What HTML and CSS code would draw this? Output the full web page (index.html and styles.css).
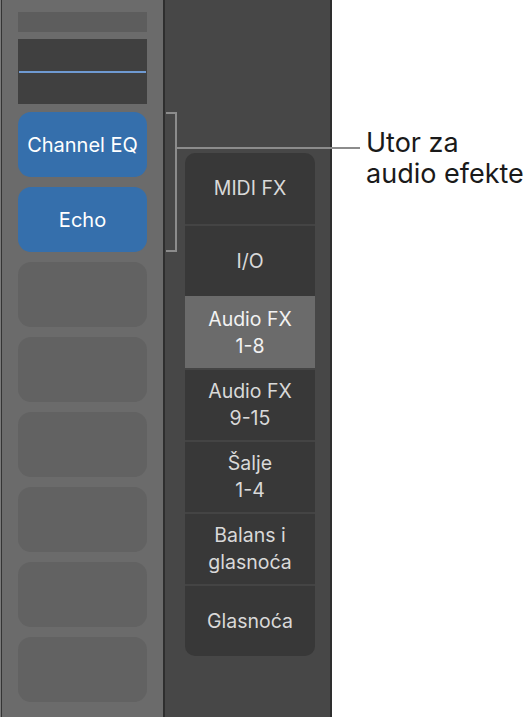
FILE: index.html
```html
<!DOCTYPE html>
<html lang="hr">
<head>
    <meta charset="UTF-8">
    <meta name="viewport" content="width=device-width, initial-scale=1.0">
    <title>Utor za audio efekte</title>
    <link rel="stylesheet" href="styles.css">
</head>
<body>
    <div class="stage">
        <div class="channel">
            <div class="slot-top"></div>
            <div class="meter"><div class="meter-line"></div></div>
            <div class="plugins">
                <div class="plugin active">Channel EQ</div>
                <div class="plugin active">Echo</div>
                <div class="plugin"></div>
                <div class="plugin"></div>
                <div class="plugin"></div>
                <div class="plugin"></div>
                <div class="plugin"></div>
                <div class="plugin"></div>
            </div>
        </div>
        <div class="side">
            <div class="menu">
                <div class="menu-item">MIDI FX</div>
                <div class="menu-item">I/O</div>
                <div class="menu-item selected">Audio FX<br>1-8</div>
                <div class="menu-item">Audio FX<br>9-15</div>
                <div class="menu-item">Šalje<br>1-4</div>
                <div class="menu-item">Balans i<br>glasnoća</div>
                <div class="menu-item">Glasnoća</div>
            </div>
        </div>

        <!-- callout -->
        <div class="bracket"></div>
        <div class="leader"></div>
        <div class="callout">Utor za<br>audio efekte</div>
    </div>
</body>
</html>
```

FILE: styles.css
```css
body {
    margin: 0;
    background-color: #fff;
    font-family: 'Inter', 'Liberation Sans', sans-serif;
}
.stage {
    position: relative;
    display: flex;
    width: 532px;
    height: 717px;
    padding-left: 1px;
    box-sizing: border-box;
    background-color: #fff;
    box-shadow: inset 1px 0 0 #7a7a7a;
}
.channel {
    width: 164px;
    height: 100%;
    background-color: #6b6b6b;
    border-left: 1px solid #343434;
    border-right: 2px solid #2e2e2e;
    padding: 12px 16px 0 16px;
    box-sizing: border-box;
    flex-shrink: 0;
}
.slot-top {
    height: 20px;
    background-color: #5d5d5d;
    margin-bottom: 7px;
}
.meter {
    height: 65px;
    background-color: #404040;
    margin-bottom: 8px;
    display: flex;
    align-items: center;
    padding: 0 1px;
}
.meter-line {
    flex: 1;
    height: 2px;
    background-color: #6f9ad2;
}
.plugins {
    display: flex;
    flex-direction: column;
    gap: 10px;
}
.plugin {
    height: 65px;
    border-radius: 13px;
    background-color: #626262;
    display: flex;
    align-items: center;
    justify-content: center;
    color: #fff;
    font-size: 20px;
}
.plugin.active {
    background-color: #356fac;
}
.side {
    width: 167px;
    height: 100%;
    background-color: #474747;
    border-right: 2px solid #2e2e2e;
    padding: 153px 0 0 20px;
    box-sizing: border-box;
    flex-shrink: 0;
}
.menu {
    width: 130px;
    background-color: #383838;
    border-radius: 10px;
    overflow: hidden;
}
.menu-item {
    height: 70px;
    display: flex;
    align-items: center;
    justify-content: center;
    text-align: center;
    color: #d9d9d9;
    font-size: 19.5px;
    line-height: 27px;
    border-top: 2px solid #444;
}
.menu-item:first-child {
    border-top: none;
    height: 71px;
}
.menu-item.selected {
    background-color: #6b6b6b;
    color: #f2f2f2;
    border-top-color: #6b6b6b;
}
.bracket {
    position: absolute;
    left: 166px;
    top: 112px;
    width: 9px;
    height: 136px;
    border: 2px solid #8c8c8c;
    border-left: none;
}
.leader {
    position: absolute;
    left: 177px;
    top: 147px;
    width: 183px;
    height: 2px;
    background-color: #8c8c8c;
}
.callout {
    position: absolute;
    left: 366px;
    top: 127px;
    font-size: 27px;
    line-height: 31px;
    color: #1a1a1a;
}
```
